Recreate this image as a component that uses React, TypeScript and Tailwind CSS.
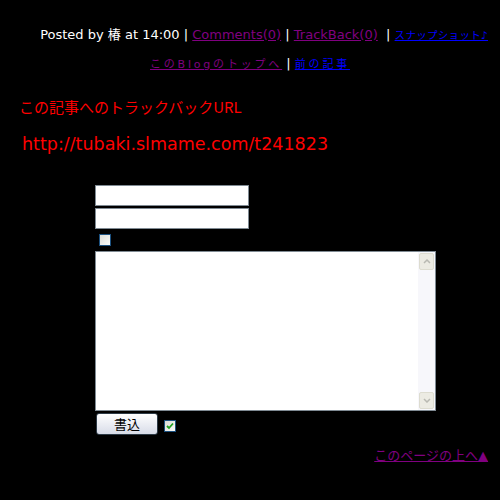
export default function App() {
  const jp = "font-['DejaVu_Sans','Noto_Sans_CJK_JP',sans-serif]"
  return (
    <div className={`w-[500px] h-[500px] bg-black text-white overflow-hidden ${jp}`}>
      <div className="pt-[27px] pr-[12px] text-right text-[13px] leading-[16px]">
        Posted by 椿 at 14:00 |{" "}
        <a className="text-[#800080] underline">Comments(0)</a> |{" "}
        <a className="text-[#800080] underline">TrackBack(0)</a>
        {"  "}&nbsp;|{" "}
        <a className="text-[#0000ff] underline text-[10.5px] tracking-[0.3px]">スナップショット♪</a>
      </div>
      <div className="mt-[13px] text-center text-[11px] leading-[16px] tracking-[2.8px]">
        <a className="text-[#800080] underline">このBlogのトップへ</a>
        <span className="text-[13px] tracking-normal"> | </span>
        <a className="text-[#0000ff] underline">前の記事</a>
      </div>

      <div className="mt-[23px] pl-[19px] text-[15px] leading-[22px] text-[#ff0000] font-['Noto_Sans_CJK_JP',sans-serif]">
        この記事へのトラックバックURL
      </div>
      <div className="mt-[15px] pl-[22px] text-[17.5px] leading-[22px] text-[#ff0000] font-['DejaVu_Sans',sans-serif]">
        http://tubaki.slmame.com/t241823
      </div>

      <form className="mt-[30px] pl-[95px] flex flex-col items-start">
        <input className="w-[154px] h-[21px] bg-white border border-[#7f8a93] outline-none" />
        <input className="mt-[2px] w-[154px] h-[21px] bg-white border border-[#7f8a93] outline-none" />
        <span className="mt-[5px] ml-[4px] w-[12px] h-[12px] border border-[#1c5180] bg-gradient-to-br from-[#dcdcd6] to-[#fbfbf9]" />
        <div className="mt-[5px] flex w-[341px] h-[160px] bg-white border border-[#7f8a93]">
          <textarea className="flex-1 resize-none outline-none bg-white" />
          <div className="w-[17px] flex flex-col bg-[#f7f7fb]">
            <div className="h-[17px] m-[1px] mb-0 rounded-[2px] bg-[#ecebe3] border border-[#dddcd0] flex items-center justify-center">
              <svg width="8" height="5" viewBox="0 0 8 5">
                <path d="M1 4 L4 1 L7 4" stroke="#b9b9b2" strokeWidth="1.5" fill="none" />
              </svg>
            </div>
            <div className="flex-1" />
            <div className="h-[17px] m-[1px] mt-0 rounded-[2px] bg-[#ecebe3] border border-[#dddcd0] flex items-center justify-center">
              <svg width="8" height="5" viewBox="0 0 8 5">
                <path d="M1 1 L4 4 L7 1" stroke="#b9b9b2" strokeWidth="1.5" fill="none" />
              </svg>
            </div>
          </div>
        </div>
        <div className="mt-[2px] flex items-start">
          <button
            type="button"
            className="ml-[1px] w-[62px] h-[22px] rounded-[3px] border border-[#2d3a46] bg-gradient-to-b from-white to-[#d8dce8] text-black text-[13px] leading-[18px] font-['Noto_Sans_CJK_JP',sans-serif]"
          >
            書込
          </button>
          <span className="ml-[6px] mt-[7px] w-[12px] h-[12px] border border-[#1c5180] bg-gradient-to-br from-[#dcdcd6] to-[#fbfbf9] flex items-center justify-center">
            <svg width="8" height="8" viewBox="0 0 8 8">
              <path d="M1 4 L3 6 L7 1.5" stroke="#21a121" strokeWidth="1.8" fill="none" />
            </svg>
          </span>
        </div>
      </form>

      <div className="mt-[13px] pr-[12px] text-right text-[13px] leading-[16px]">
        <a className="text-[#800080] underline">このページの上へ▲</a>
      </div>
    </div>
  )
}
